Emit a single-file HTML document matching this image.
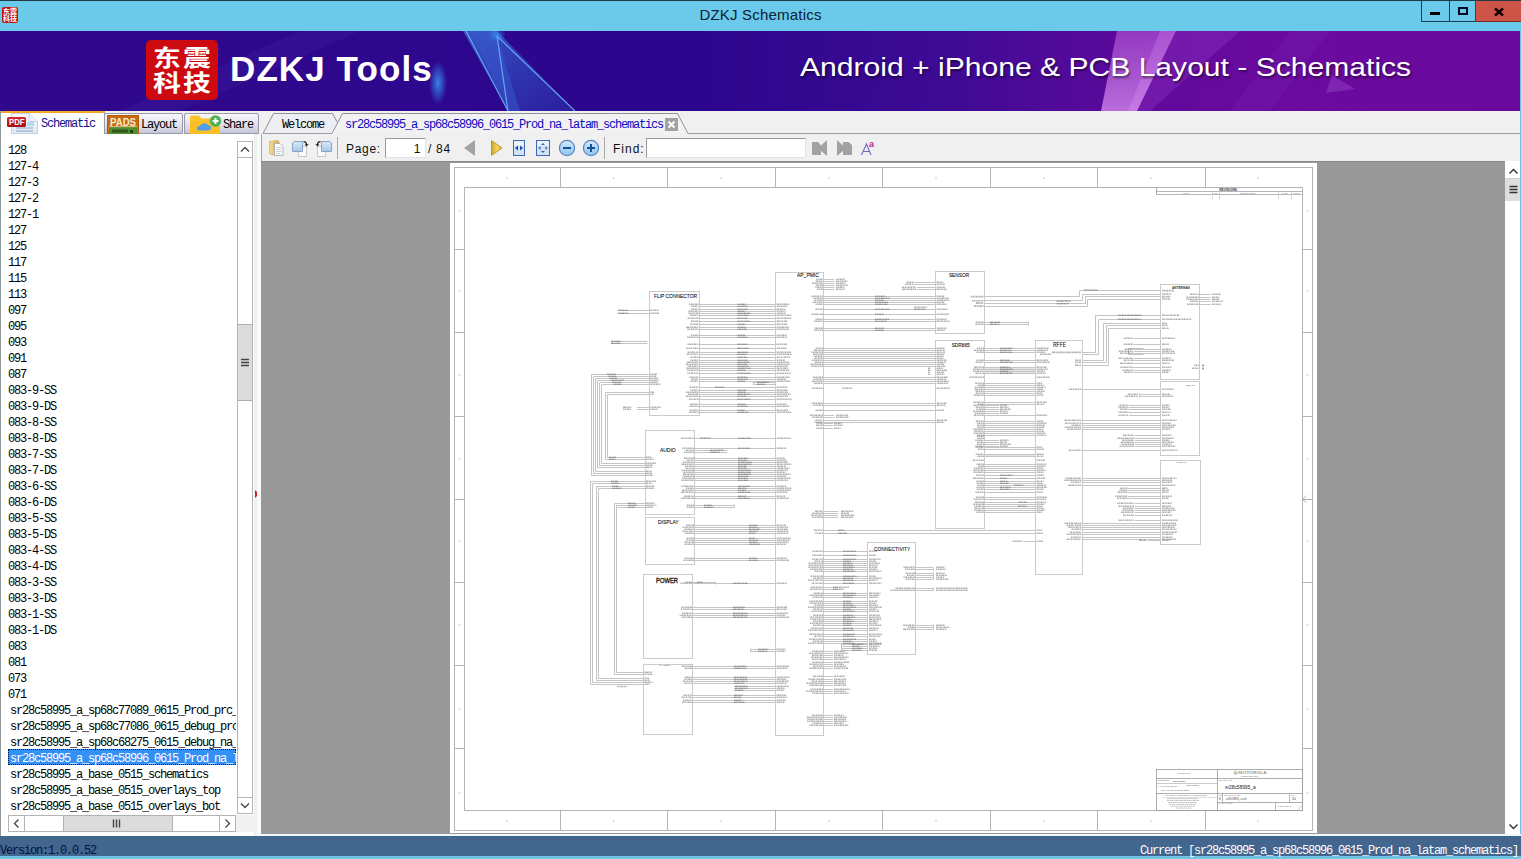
<!DOCTYPE html>
<html lang="en"><head><meta charset="utf-8"><title>DZKJ Schematics</title>
<style>
html,body{margin:0;padding:0}
body{width:1521px;height:859px;position:relative;overflow:hidden;background:#f0f0f0;font-family:"Liberation Sans",sans-serif;color:#000}
.abs,.abs *{position:absolute}
div{box-sizing:border-box}
.mono{font-family:"Liberation Mono","Noto Sans CJK SC",monospace;font-size:12px;letter-spacing:-1.2px;white-space:pre}
#titlebar{left:0;top:0;width:1521px;height:31px;background:#6bc9ea;border-top:1px solid #1d3b46}
#title{left:0;width:1521px;top:5px;text-align:center;font-size:15px;line-height:18px;color:#0c2238;letter-spacing:.2px}
#appicon{left:2px;top:6px;width:16px;height:16px;background:#c4120d;border-radius:2px;overflow:hidden}
#appicon span{color:#fff;font:bold 7px/7px "Liberation Sans","Noto Sans CJK SC",sans-serif;left:1px;top:1px;width:14px;letter-spacing:0}
#wbtns{left:1421px;top:0;width:100px;height:21px}
#wbtns .b{top:0;height:21px;border:1px solid #123f55;border-top:none}
#banner{left:0;top:31px;width:1520px;height:80px;overflow:hidden;background:linear-gradient(90deg,#30088c 0%,#2d078d 30%,#2a068c 45%,#3d0a94 62%,#5f0a9c 75%,#6b0a9e 85%,#6a0a9d 100%)}
#logo{left:146px;top:9px;width:72px;height:60px;background:#cc0a10;border-radius:5px}
#logo span{color:#fff;font:bold 22.5px/22.5px "Liberation Sans","Noto Sans CJK SC",sans-serif;left:7px;white-space:nowrap;letter-spacing:1.7px;transform:scaleX(1.24);transform-origin:0 0}
#bt1{left:230px;top:18px;color:#fff;font:bold 35px/40px "Liberation Sans",sans-serif;white-space:nowrap;letter-spacing:1.1px}
#bt2{left:800px;top:20px;color:#fff;font:26px/32px "Liberation Sans",sans-serif;white-space:nowrap;text-shadow:1px 2px 2px rgba(0,0,0,.5);transform:scaleX(1.157);transform-origin:0 0}
/* left tabs */
.ltab{top:113px;height:21px;border:1px solid #9a9aa8;border-radius:2px 2px 0 0;background:linear-gradient(#f6f6fa,#e2e2ee 55%,#c6c6da)}
.ltab span,.ttab span{top:4px;line-height:14px}
#leftpanel{left:1px;top:134px;width:253px;height:702px;background:#fff}
#list{left:8px;top:141px;width:228px;height:672px;overflow:hidden;background:#fff}
.li{left:0;height:16px;width:400px}
.li span{left:0;top:3px;line-height:14px;font-family:"Liberation Mono","Noto Sans CJK SC",monospace;font-size:12px;letter-spacing:-1.2px;white-space:pre}
.li.sr span{left:2px}
.li.sel{width:228px;background:#3390f5;border:1px dotted #113;}
.li.sel span{color:#fff;left:1px;top:2px}
.sb{background:#fff;border:1px solid #b4b4b4}
.thumb{background:#dcdcdc;border:1px solid #b0b0b0}
#viewport{left:261px;top:161px;width:1244px;height:673px;background:#999;overflow:hidden;border-top:1px solid #8a8a8a}
#status{z-index:3;left:0;top:836px;width:1521px;height:20px;background:#42668e;border-top:1px solid #3a6a88}
#bottomstrip{left:0;top:856px;width:1521px;height:3px;background:#6fc5e3}

#tb{left:262px;top:134px;width:1242px;height:27px}
.tbt{font:12px/16px "Liberation Sans",sans-serif;top:7px;white-space:nowrap;color:#111;letter-spacing:.7px}
.inp{background:#fff;border:1px solid #e3e3e3;border-top-color:#9a9a9a;border-left-color:#9a9a9a}
.vsep{width:1px;background:#a8a8a8;top:3px;height:22px}

</style></head>
<body>
<div class="abs" id="titlebar">
  <div id="appicon"><span>东震<br>科技</span></div>
  <div id="title">DZKJ Schematics</div>
  <div id="wbtns">
    <div class="b" style="left:0;width:29px"></div>
    <div class="b" style="left:28px;width:27px"></div>
    <div class="b" style="left:54px;width:46px;background:#cc5548;border-color:#7a2a22;border-right:none"></div>
    <div style="left:9px;top:11px;width:10px;height:3px;background:#000"></div>
    <div style="left:37px;top:6px;width:10px;height:8px;border:2px solid #06062a"></div>
    <svg style="left:72px;top:6px" width="12" height="10" viewBox="0 0 12 10"><path d="M2 1.500 L10 8.500 M10 1.500 L2 8.500" stroke="#100" stroke-width="2.500"/></svg>
  </div>
</div>
<div class="abs" id="banner">
  <svg style="left:0;top:0" width="1520" height="80" viewBox="0 0 1520 80">
    <defs>
      <linearGradient id="bl" x1="0" y1="0" x2="1" y2="1"><stop offset="0" stop-color="#3a6fd8" stop-opacity=".75"/><stop offset="1" stop-color="#2a48c0" stop-opacity=".35"/></linearGradient>
      <linearGradient id="pk" x1="0" y1="0" x2="0" y2="1"><stop offset="0" stop-color="#c060e0" stop-opacity=".55"/><stop offset="1" stop-color="#d890f0" stop-opacity=".75"/></linearGradient>
      <radialGradient id="glow"><stop offset="0" stop-color="#3aa0ff" stop-opacity=".8"/><stop offset="1" stop-color="#3aa0ff" stop-opacity="0"/></radialGradient>
    </defs>
    <polygon points="300,0 360,0 180,80 120,80" fill="#4a30b0" opacity=".18"/>
    <polygon points="463,0 497,0 575,80 508,80" fill="url(#bl)"/>
    <polygon points="497,6 520,80 508,80 470,0 497,0" fill="#3a60d0" opacity=".45"/>
    <path d="M497 5 L508 80 M497 5 L575 80 M466 0 L508 80" stroke="#6fc0ff" stroke-width="1.2" fill="none" opacity=".8"/>
    <ellipse cx="438" cy="52" rx="9" ry="22" fill="url(#glow)"/>
    <ellipse cx="497" cy="4" rx="9" ry="7" fill="url(#glow)" opacity=".8"/>
    <polygon points="1117,0 1176,0 1137,80 1101,80" fill="url(#pk)"/>
    <polygon points="1160,0 1176,0 1137,80 1128,80" fill="#e8a0ff" opacity=".25"/>
    <polygon points="1176,0 1240,0 1150,80 1137,80" fill="#a040d0" opacity=".28"/>
    <polygon points="1290,0 1330,0 1270,80 1230,80" fill="#8030c0" opacity=".18"/>
    <polygon points="1326,62 1355,58 1332,44" fill="#9a50d0" opacity=".4"/>
  </svg>
  <div id="logo"><span style="top:8px">东震</span><span style="top:33px">科技</span></div>
  <div id="bt1">DZKJ Tools</div>
  <div id="bt2">Android + iPhone &amp; PCB Layout - Schematics</div>
</div>
<div class="abs" id="tabs">
  <div style="left:1px;top:111px;width:104px;height:24px;background:#fff;border-top:2px solid #f5a623;border-right:1px solid #9a9aa8"></div>
  <div class="ltab" style="left:104px;width:79px"></div>
  <div class="ltab" style="left:184px;width:75px"></div>
  <svg style="left:0;top:111px" width="262" height="24" viewBox="0 111 262 24">
    <defs>
      <linearGradient id="pgd" x1="0" y1="0" x2="0" y2="1"><stop offset="0" stop-color="#f8fbfe"/><stop offset="1" stop-color="#dce9f6"/></linearGradient>
      <linearGradient id="redg" x1="0" y1="0" x2="0" y2="1"><stop offset="0" stop-color="#d8262c"/><stop offset="1" stop-color="#a80c12"/></linearGradient>
    </defs>
    <!-- pdf page -->
    <path d="M11.500 113.500 L29 113.500 L37.500 121.500 L37.500 133.500 L11.500 133.500 Z" fill="url(#pgd)" stroke="#c4d2e4" stroke-width="1"/>
    <path d="M29 113.500 L29 121.500 L37.500 121.500" fill="#eef4fb" stroke="#c4d2e4" stroke-width="1"/>
    <path d="M16 128 H33 M16 131 H33" stroke="#a8bcd4" stroke-width="1.3"/>
    <rect x="27" y="122" width="7" height="4" fill="#b8d4ee"/>
    <rect x="7" y="117" width="19" height="10" rx="1.500" fill="url(#redg)"/>
    <text x="9" y="125" font-family="Liberation Sans, sans-serif" font-weight="bold" font-size="8.500" fill="#fff" textLength="15.500" lengthAdjust="spacingAndGlyphs">PDF</text>
    <!-- PADS -->
    <rect x="107.500" y="115.500" width="31" height="18" fill="#c76a12" stroke="#b05a0a" stroke-width="1"/>
    <rect x="109" y="127" width="28" height="7" fill="#4f8c2c"/>
    <rect x="112" y="129.500" width="16" height="3" fill="#33561e"/>
    <rect x="130" y="130" width="3" height="3" fill="#22401a"/>
    <rect x="109" y="126" width="28" height="1.200" fill="#e9d9a0" opacity=".7"/>
    <text x="110" y="126" font-family="Liberation Sans, sans-serif" font-weight="bold" font-size="11" fill="#f6ebc8" textLength="26" lengthAdjust="spacingAndGlyphs">PADS</text>
    <!-- share folder -->
    <path d="M190 117 Q190 115.500 191.500 115.500 L199 115.500 L201.500 118.500 L218 118.500 Q220 118.500 220 120.500 L220 134 L190 134 Z" fill="#fcc42c"/>
    <path d="M190 121 L220 121 L220 134 L190 134 Z" fill="#fbbf24"/>
    <path d="M199.500 130.500 Q196 130.500 197 127.500 Q197.500 125.500 200 126 Q201.500 122.500 205 123.500 Q207.500 123 208.500 125.500 Q211.500 125.500 211 128.500 Q210.500 130.500 208 130.500 Z" fill="#4f9fec"/>
    <circle cx="215.500" cy="121" r="5.600" fill="#4caf50" stroke="#6cc070" stroke-width=".6"/>
    <path d="M212.500 121 H218.500 M215.500 118 V124" stroke="#fff" stroke-width="2"/>
  </svg>
  <div class="mono" style="left:41px;top:117px;line-height:14px;color:#10108c">Schematic</div>
  <div class="mono" style="left:141px;top:118px;line-height:14px">Layout</div>
  <div class="mono" style="left:223px;top:118px;line-height:14px">Share</div>
</div>
<div class="abs" id="toptabs">
  <svg style="left:255px;top:111px" width="1266" height="26" viewBox="255 111 1266 26">
    <path d="M263 133.5 L273.5 113.5 L332.5 113.5 L337.5 123 L332 133.5 Z" fill="#eceef3" stroke="none"/>
    <path d="M263 133.5 L273.5 113.5 L332.5 113.5 L338 123.5" fill="none" stroke="#8e9196" stroke-width="1"/>
    <path d="M263 133.5 L332 133.5" fill="none" stroke="#9a9da2" stroke-width="1"/>
    <path d="M332 133.5 L342.5 113.5 L677.5 113.5 L688 133.5" fill="#f2f2f2" stroke="#8e9196" stroke-width="1"/>
    <path d="M688 133.5 L1520 133.5" fill="none" stroke="#9a9da2" stroke-width="1"/>
    <rect x="665" y="118" width="13" height="13" fill="#a2a2a2"/>
    <path d="M668.5 121.5 L674.5 127.5 M674.5 121.5 L668.5 127.5" stroke="#fff" stroke-width="1.8"/>
  </svg>
  <div class="mono" style="left:282px;top:118px;line-height:14px">Welcome</div>
  <div class="mono" style="left:345px;top:118px;line-height:14px;color:#0a0ac0">sr28c58995_a_sp68c58996_0615_Prod_na_latam_schematics</div>
</div>
<div class="abs" id="tb">
  <div class="vsep" style="left:75px"></div>
  <div class="tbt" style="left:84px">Page:</div>
  <div class="inp" style="left:123px;top:4px;width:41px;height:20px"></div>
  <div class="tbt" style="left:123px;width:36px;text-align:right">1</div>
  <div class="tbt" style="left:166px">/ 84</div>
  <div class="vsep" style="left:342px"></div>
  <div class="tbt" style="left:351px;letter-spacing:1px">Find:</div>
  <div class="inp" style="left:384px;top:4px;width:160px;height:20px"></div>
  <svg style="left:0;top:0" width="1242" height="27" viewBox="262 134 1242 27">
  <defs>
    <linearGradient id="gold" x1="0" y1="0" x2="1" y2="0"><stop offset="0" stop-color="#c9a227"/><stop offset=".5" stop-color="#f2d65a"/><stop offset="1" stop-color="#e0b030"/></linearGradient>
    <linearGradient id="fold" x1="0" y1="0" x2="1" y2="0"><stop offset="0" stop-color="#f3d98a"/><stop offset="1" stop-color="#d9b060"/></linearGradient>
    <linearGradient id="bluepg" x1="0" y1="0" x2="0" y2="1"><stop offset="0" stop-color="#d8e8f8"/><stop offset="1" stop-color="#a8c8e8"/></linearGradient>
    <linearGradient id="circ" x1="0" y1="0" x2="0" y2="1"><stop offset="0" stop-color="#d6eafc"/><stop offset="1" stop-color="#8cc4f0"/></linearGradient>
  </defs>
  <!-- folder+doc -->
  <path d="M269.5 141.5 L277 140.5 L279 141 L279 153 L272 155 L269.5 153.5 Z" fill="url(#fold)" stroke="#cfa650" stroke-width=".6"/>
  <path d="M274.5 143.5 L280 143.5 L283 146.5 L283 155.5 L274.5 155.5 Z" fill="#fdfdfd" stroke="#9aa4b0" stroke-width=".8"/>
  <path d="M276 147.5 H281.5 M276 149.5 H281.5 M276 151.5 H281.5 M276 153.5 H280" stroke="#b5bcc6" stroke-width=".7"/>
  <!-- rotate pages 1 -->
  <path d="M299.5 146.500 L306.500 146.5 L306.500 156.5 L298.500 156.5 L298.500 150" fill="#fafafa" stroke="#c4c4c8" stroke-width=".9"/>
  <path d="M294 141.500 L302.500 141.500 L302.500 151.500 L292.500 151.500 L292.500 143 Z" fill="url(#bluepg)" stroke="#7e9cc4" stroke-width=".9"/>
  <path d="M303.500 141.700 Q306.600 141.700 306.600 145" fill="none" stroke="#222" stroke-width="1.2"/>
  <path d="M304.600 144.300 L308.600 144.300 L306.600 146.600 Z" fill="#222"/>
  <!-- rotate pages 2 -->
  <path d="M324.500 146.500 L317.500 146.500 L317.500 156.500 L325.500 156.500 L325.500 150" fill="#fafafa" stroke="#c4c4c8" stroke-width=".9"/>
  <path d="M321.500 141.500 L330 141.500 L331.500 143 L331.500 151.500 L321.500 151.500 Z" fill="url(#bluepg)" stroke="#7e9cc4" stroke-width=".9"/>
  <path d="M320.500 141.700 Q317.400 141.700 317.400 145" fill="none" stroke="#222" stroke-width="1.2"/>
  <path d="M315.400 144.300 L319.400 144.300 L317.400 146.600 Z" fill="#222"/>
  <!-- prev / next -->
  <path d="M475 140 L475 156 L464 148 Z" fill="#a3a3a3"/>
  <path d="M491.500 140.500 L491.500 155.500 L502 148 Z" fill="url(#gold)" stroke="#c09a28" stroke-width="1"/>
  <!-- fit width -->
  <rect x="513.500" y="140.500" width="11" height="15" fill="#cfe2f6" stroke="#3a6ab0" stroke-width="1"/>
  <rect x="514" y="141" width="10" height="5" fill="#eaf3fc"/>
  <path d="M518 145.500 L518 150.500 L515 148 Z M520 145.500 L520 150.500 L523 148 Z" fill="#1d4f9c"/>
  <!-- fit page -->
  <rect x="536.500" y="140.500" width="13" height="15" fill="#cfe2f6" stroke="#3a6ab0" stroke-width="1"/>
  <rect x="537" y="141" width="12" height="5" fill="#eaf3fc"/>
  <path d="M541 145 L545 145 L543 143 Z M541 151 L545 151 L543 153 Z M540.500 146 L540.500 150 L538.500 148 Z M545.500 146 L545.500 150 L547.500 148 Z" fill="#35609f"/>
  <!-- zoom out / in -->
  <circle cx="567" cy="148" r="7.600" fill="url(#circ)" stroke="#5a86c0" stroke-width="1.2"/>
  <rect x="563" y="147" width="8" height="2" fill="#14509c"/>
  <circle cx="591" cy="148" r="7.600" fill="url(#circ)" stroke="#5a86c0" stroke-width="1.2"/>
  <rect x="587" y="147" width="8" height="2" fill="#14509c"/><rect x="590" y="144" width="2" height="8" fill="#14509c"/>
  <!-- find prev / next -->
  <path d="M812 142 L818 142 L821 145.500 L827 140 L827 156 L821 151 L821 155 L812 155 Z" fill="#a2a2a2"/>
  <path d="M837 140 L843 145.500 L843 142 L848.500 142 L852 145 L852 155 L843 155 L843 151 L837 156 Z" fill="#a2a2a2"/>
  <!-- Aa -->
  <path d="M861.500 155 L866.500 144 L871 155 M863.500 151.500 L869.500 151.500" fill="none" stroke="#7468c8" stroke-width="1.1"/>
  <text x="869" y="147" font-family="Liberation Sans, sans-serif" font-size="9" fill="#c02888" font-weight="bold">a</text>
</svg>

</div>
<div class="abs" id="leftpanel"></div>
<div class="abs" id="list">
<div class="li" style="top:0px"><span>128</span></div>
<div class="li" style="top:16px"><span>127-4</span></div>
<div class="li" style="top:32px"><span>127-3</span></div>
<div class="li" style="top:48px"><span>127-2</span></div>
<div class="li" style="top:64px"><span>127-1</span></div>
<div class="li" style="top:80px"><span>127</span></div>
<div class="li" style="top:96px"><span>125</span></div>
<div class="li" style="top:112px"><span>117</span></div>
<div class="li" style="top:128px"><span>115</span></div>
<div class="li" style="top:144px"><span>113</span></div>
<div class="li" style="top:160px"><span>097</span></div>
<div class="li" style="top:176px"><span>095</span></div>
<div class="li" style="top:192px"><span>093</span></div>
<div class="li" style="top:208px"><span>091</span></div>
<div class="li" style="top:224px"><span>087</span></div>
<div class="li" style="top:240px"><span>083-9-SS</span></div>
<div class="li" style="top:256px"><span>083-9-DS</span></div>
<div class="li" style="top:272px"><span>083-8-SS</span></div>
<div class="li" style="top:288px"><span>083-8-DS</span></div>
<div class="li" style="top:304px"><span>083-7-SS</span></div>
<div class="li" style="top:320px"><span>083-7-DS</span></div>
<div class="li" style="top:336px"><span>083-6-SS</span></div>
<div class="li" style="top:352px"><span>083-6-DS</span></div>
<div class="li" style="top:368px"><span>083-5-SS</span></div>
<div class="li" style="top:384px"><span>083-5-DS</span></div>
<div class="li" style="top:400px"><span>083-4-SS</span></div>
<div class="li" style="top:416px"><span>083-4-DS</span></div>
<div class="li" style="top:432px"><span>083-3-SS</span></div>
<div class="li" style="top:448px"><span>083-3-DS</span></div>
<div class="li" style="top:464px"><span>083-1-SS</span></div>
<div class="li" style="top:480px"><span>083-1-DS</span></div>
<div class="li" style="top:496px"><span>083</span></div>
<div class="li" style="top:512px"><span>081</span></div>
<div class="li" style="top:528px"><span>073</span></div>
<div class="li" style="top:544px"><span>071</span></div>
<div class="li sr" style="top:560px"><span>sr28c58995_a_sp68c77089_0615_Prod_prc_schematics</span></div>
<div class="li sr" style="top:576px"><span>sr28c58995_a_sp68c77086_0615_debug_prc_schematics</span></div>
<div class="li sr" style="top:592px"><span>sr28c58995_a_sp68c68275_0615_debug_na_latam_schematics</span></div>
<div class="li sr sel" style="top:608px"><span>sr28c58995_a_sp68c58996_0615_Prod_na_latam_schematics</span></div>
<div class="li sr" style="top:624px"><span>sr28c58995_a_base_0515_schematics</span></div>
<div class="li sr" style="top:640px"><span>sr28c58995_a_base_0515_overlays_top</span></div>
<div class="li sr" style="top:656px"><span>sr28c58995_a_base_0515_overlays_bot</span></div>
</div>

<div class="abs" id="sbs">
  <div class="sb" style="left:237px;top:141px;width:16px;height:673px"></div>
  <div class="sb" style="left:237px;top:141px;width:16px;height:17px"></div>
  <div class="sb" style="left:237px;top:797px;width:16px;height:17px"></div>
  <div class="thumb" style="left:237px;top:324px;width:16px;height:77px"></div>
  <div class="sb" style="left:8px;top:815px;width:228px;height:17px"></div>
  <div class="sb" style="left:8px;top:815px;width:17px;height:17px"></div>
  <div class="sb" style="left:219px;top:815px;width:17px;height:17px"></div>
  <div class="thumb" style="left:63px;top:815px;width:110px;height:17px"></div>
  <svg style="left:0;top:134px" width="262" height="702" viewBox="0 134 262 702">
    <path d="M241 151.500 L245 147.500 L249 151.500" fill="none" stroke="#444" stroke-width="1.3"/>
    <path d="M241 803.500 L245 807.500 L249 803.500" fill="none" stroke="#444" stroke-width="1.3"/>
    <path d="M241 359.500 H249 M241 362.500 H249 M241 365.500 H249" stroke="#444" stroke-width="1.400"/>
    <path d="M18.500 819.500 L14.500 823.500 L18.500 827.500" fill="none" stroke="#444" stroke-width="1.3"/>
    <path d="M225.500 819.500 L229.500 823.500 L225.500 827.500" fill="none" stroke="#444" stroke-width="1.3"/>
    <path d="M113.500 819.500 V827.500 M116.500 819.500 V827.500 M119.500 819.500 V827.500" stroke="#444" stroke-width="1.400"/>
    <path d="M255 490 L259 494 L255 498 Z" fill="#d42020"/>
  </svg>
</div>
<div class="abs" id="vscroll">
  <div style="left:1505px;top:161px;width:15px;height:673px;background:#fff"></div>
  <div style="left:1505px;top:178px;width:15px;height:23px;background:#dedede;border-top:1px solid #cfcfcf"></div>
  <svg style="left:1505px;top:161px" width="15" height="673" viewBox="1505 161 15 673">
    <path d="M1509.500 173.500 L1513.500 169.500 L1517.500 173.500" fill="none" stroke="#333" stroke-width="1.400"/>
    <path d="M1509.500 824.500 L1513.500 828.500 L1517.500 824.500" fill="none" stroke="#333" stroke-width="1.400"/>
    <path d="M1509.500 186.500 H1517.500 M1509.500 189.500 H1517.500 M1509.500 192.500 H1517.500" stroke="#333" stroke-width="1.500"/>
  </svg>
  <div style="left:1520px;top:31px;width:1px;height:828px;background:#6cc2e8"></div>
</div>
<div class="abs" id="status">
  <div class="mono" style="left:0;top:7px;line-height:14px;color:#06103c">Version:1.0.0.52</div>
  <div class="mono" style="right:3px;top:7px;line-height:14px;color:#fff">Current [sr28c58995_a_sp68c58996_0615_Prod_na_latam_schematics]</div>
</div>
<div class="abs" id="bottomstrip"></div>
<div class="abs" style="left:236px;top:815px;width:18px;height:17px;background:#f0f0f0"></div>
<div class="abs" style="left:257px;top:135px;width:4px;height:701px;background:#fafafa"></div>
<div class="abs" style="left:261px;top:834px;width:1260px;height:2px;background:#f2f7fb"></div>
<div class="abs" style="left:0;top:111px;width:1px;height:725px;background:#8c989c"></div>
<div class="abs" style="left:261px;top:134px;width:1px;height:27px;background:#a4a4a4"></div>
<div class="abs" id="viewport">
<svg style="position:absolute;left:1px;top:-1px" width="1242" height="673" viewBox="262 161 1242 673" font-family="Liberation Sans, sans-serif" shape-rendering="auto">
<rect x="450" y="163" width="867" height="670" fill="#fff"/>
<rect x="454.5" y="167.5" width="858" height="663" fill="none" stroke="#b4b4b4" stroke-width="1"/>
<rect x="464.5" y="187.5" width="838" height="623" fill="none" stroke="#b4b4b4" stroke-width="1"/>
<path d="M560.5 167.5L560.5 187.5" stroke="#b4b4b4" stroke-width="1"/>
<path d="M560.5 810.5L560.5 830.5" stroke="#b4b4b4" stroke-width="1"/>
<path d="M667.5 167.5L667.5 187.5" stroke="#b4b4b4" stroke-width="1"/>
<path d="M667.5 810.5L667.5 830.5" stroke="#b4b4b4" stroke-width="1"/>
<path d="M775.5 167.5L775.5 187.5" stroke="#b4b4b4" stroke-width="1"/>
<path d="M775.5 810.5L775.5 830.5" stroke="#b4b4b4" stroke-width="1"/>
<path d="M882.5 167.5L882.5 187.5" stroke="#b4b4b4" stroke-width="1"/>
<path d="M882.5 810.5L882.5 830.5" stroke="#b4b4b4" stroke-width="1"/>
<path d="M990.5 167.5L990.5 187.5" stroke="#b4b4b4" stroke-width="1"/>
<path d="M990.5 810.5L990.5 830.5" stroke="#b4b4b4" stroke-width="1"/>
<path d="M1097.5 167.5L1097.5 187.5" stroke="#b4b4b4" stroke-width="1"/>
<path d="M1097.5 810.5L1097.5 830.5" stroke="#b4b4b4" stroke-width="1"/>
<path d="M1205.5 167.5L1205.5 187.5" stroke="#b4b4b4" stroke-width="1"/>
<path d="M1205.5 810.5L1205.5 830.5" stroke="#b4b4b4" stroke-width="1"/>
<path d="M454.5 249.5L464.5 249.5" stroke="#b4b4b4" stroke-width="1"/>
<path d="M1302.5 249.5L1312.5 249.5" stroke="#b4b4b4" stroke-width="1"/>
<path d="M454.5 332.5L464.5 332.5" stroke="#b4b4b4" stroke-width="1"/>
<path d="M1302.5 332.5L1312.5 332.5" stroke="#b4b4b4" stroke-width="1"/>
<path d="M454.5 416.5L464.5 416.5" stroke="#b4b4b4" stroke-width="1"/>
<path d="M1302.5 416.5L1312.5 416.5" stroke="#b4b4b4" stroke-width="1"/>
<path d="M454.5 499.5L464.5 499.5" stroke="#b4b4b4" stroke-width="1"/>
<path d="M1302.5 499.5L1312.5 499.5" stroke="#b4b4b4" stroke-width="1"/>
<path d="M454.5 582.5L464.5 582.5" stroke="#b4b4b4" stroke-width="1"/>
<path d="M1302.5 582.5L1312.5 582.5" stroke="#b4b4b4" stroke-width="1"/>
<path d="M454.5 665.5L464.5 665.5" stroke="#b4b4b4" stroke-width="1"/>
<path d="M1302.5 665.5L1312.5 665.5" stroke="#b4b4b4" stroke-width="1"/>
<path d="M454.5 748.5L464.5 748.5" stroke="#b4b4b4" stroke-width="1"/>
<path d="M1302.5 748.5L1312.5 748.5" stroke="#b4b4b4" stroke-width="1"/>
<rect x="506.4" y="177.2" width="1.2" height="1.6" fill="#c4c4c4"/>
<rect x="506.4" y="820.2" width="1.2" height="1.6" fill="#c4c4c4"/>
<rect x="612.9" y="177.2" width="1.2" height="1.6" fill="#c4c4c4"/>
<rect x="612.9" y="820.2" width="1.2" height="1.6" fill="#c4c4c4"/>
<rect x="720.4" y="177.2" width="1.2" height="1.6" fill="#c4c4c4"/>
<rect x="720.4" y="820.2" width="1.2" height="1.6" fill="#c4c4c4"/>
<rect x="828.4" y="177.2" width="1.2" height="1.6" fill="#c4c4c4"/>
<rect x="828.4" y="820.2" width="1.2" height="1.6" fill="#c4c4c4"/>
<rect x="935.4" y="177.2" width="1.2" height="1.6" fill="#c4c4c4"/>
<rect x="935.4" y="820.2" width="1.2" height="1.6" fill="#c4c4c4"/>
<rect x="1043.4" y="177.2" width="1.2" height="1.6" fill="#c4c4c4"/>
<rect x="1043.4" y="820.2" width="1.2" height="1.6" fill="#c4c4c4"/>
<rect x="1150.4" y="177.2" width="1.2" height="1.6" fill="#c4c4c4"/>
<rect x="1150.4" y="820.2" width="1.2" height="1.6" fill="#c4c4c4"/>
<rect x="1257.4" y="177.2" width="1.2" height="1.6" fill="#c4c4c4"/>
<rect x="1257.4" y="820.2" width="1.2" height="1.6" fill="#c4c4c4"/>
<rect x="458.7" y="210.4" width="1.6" height="1.2" fill="#c4c4c4"/>
<rect x="1306.7" y="210.4" width="1.6" height="1.2" fill="#c4c4c4"/>
<rect x="458.7" y="290.4" width="1.6" height="1.2" fill="#c4c4c4"/>
<rect x="1306.7" y="290.4" width="1.6" height="1.2" fill="#c4c4c4"/>
<rect x="458.7" y="374.4" width="1.6" height="1.2" fill="#c4c4c4"/>
<rect x="1306.7" y="374.4" width="1.6" height="1.2" fill="#c4c4c4"/>
<rect x="458.7" y="458.4" width="1.6" height="1.2" fill="#c4c4c4"/>
<rect x="1306.7" y="458.4" width="1.6" height="1.2" fill="#c4c4c4"/>
<rect x="458.7" y="540.4" width="1.6" height="1.2" fill="#c4c4c4"/>
<rect x="1306.7" y="540.4" width="1.6" height="1.2" fill="#c4c4c4"/>
<rect x="458.7" y="624.4" width="1.6" height="1.2" fill="#c4c4c4"/>
<rect x="1306.7" y="624.4" width="1.6" height="1.2" fill="#c4c4c4"/>
<rect x="458.7" y="708.4" width="1.6" height="1.2" fill="#c4c4c4"/>
<rect x="1306.7" y="708.4" width="1.6" height="1.2" fill="#c4c4c4"/>
<rect x="458.7" y="792.4" width="1.6" height="1.2" fill="#c4c4c4"/>
<rect x="1306.7" y="792.4" width="1.6" height="1.2" fill="#c4c4c4"/>
<path d="M1310.5 499.5L1302.5 499.5" stroke="#a0a0a0" stroke-width="0.7" fill="none"/>
<path d="M1306.5 495.5L1302.5 499.5L1306.5 502.5" stroke="#a0a0a0" stroke-width="0.7" fill="none"/>
<path d="M1298.5 809.5L1301.5 805.5" stroke="#a0a0a0" stroke-width="0.6"/>
<rect x="649.5" y="291.5" width="50" height="124" fill="none" stroke="#cbcbcb" stroke-width="1"/>
<rect x="775.5" y="272.5" width="48" height="463" fill="none" stroke="#cbcbcb" stroke-width="1"/>
<rect x="935.5" y="271.5" width="49" height="62" fill="none" stroke="#cbcbcb" stroke-width="1"/>
<rect x="935.5" y="340.5" width="49" height="188" fill="none" stroke="#cbcbcb" stroke-width="1"/>
<rect x="1035.5" y="340.5" width="47" height="234" fill="none" stroke="#cbcbcb" stroke-width="1"/>
<rect x="1160.5" y="284.5" width="39" height="95" fill="none" stroke="#cbcbcb" stroke-width="1"/>
<rect x="1160.5" y="381.5" width="39" height="74" fill="none" stroke="#cbcbcb" stroke-width="1"/>
<rect x="1160.5" y="460.5" width="40" height="84" fill="none" stroke="#cbcbcb" stroke-width="1"/>
<rect x="645.5" y="430.5" width="49" height="84" fill="none" stroke="#cbcbcb" stroke-width="1"/>
<rect x="645.5" y="517.5" width="49" height="47" fill="none" stroke="#cbcbcb" stroke-width="1"/>
<rect x="643.5" y="574.5" width="49" height="84" fill="none" stroke="#cbcbcb" stroke-width="1"/>
<rect x="643.5" y="664.5" width="49" height="70" fill="none" stroke="#cbcbcb" stroke-width="1"/>
<rect x="867.5" y="542.5" width="48" height="112" fill="none" stroke="#cbcbcb" stroke-width="1"/>
<path d="M753.5 382.5L753.5 384.5" stroke="#c4c4c4" stroke-width="1"/>
<path d="M649.5 374.5L591.5 374.5L591.5 475.5L645.5 475.5" stroke="#c4c4c4" stroke-width="1" fill="none"/>
<path d="M649.5 376.5L593.5 376.5L593.5 473.5L645.5 473.5" stroke="#c4c4c4" stroke-width="1" fill="none"/>
<path d="M649.5 378.5L595.5 378.5L595.5 471.5L645.5 471.5" stroke="#c4c4c4" stroke-width="1" fill="none"/>
<path d="M649.5 380.5L597.5 380.5L597.5 467.5L645.5 467.5" stroke="#c4c4c4" stroke-width="1" fill="none"/>
<path d="M649.5 382.5L599.5 382.5L599.5 465.5L645.5 465.5" stroke="#c4c4c4" stroke-width="1" fill="none"/>
<path d="M649.5 384.5L601.5 384.5L601.5 463.5L645.5 463.5" stroke="#c4c4c4" stroke-width="1" fill="none"/>
<path d="M649.5 392.5L605.5 392.5L605.5 459.5L645.5 459.5" stroke="#c4c4c4" stroke-width="1" fill="none"/>
<path d="M649.5 394.5L607.5 394.5L607.5 457.5L645.5 457.5" stroke="#c4c4c4" stroke-width="1" fill="none"/>
<path d="M645.5 481.5L590.5 481.5L590.5 684.5L643.5 684.5" stroke="#c4c4c4" stroke-width="1" fill="none"/>
<path d="M645.5 483.5L592.5 483.5L592.5 682.5L643.5 682.5" stroke="#c4c4c4" stroke-width="1" fill="none"/>
<path d="M645.5 486.5L596.5 486.5L596.5 680.5L643.5 680.5" stroke="#c4c4c4" stroke-width="1" fill="none"/>
<path d="M645.5 488.5L598.5 488.5L598.5 678.5L643.5 678.5" stroke="#c4c4c4" stroke-width="1" fill="none"/>
<path d="M645.5 503.5L614.5 503.5L614.5 674.5L643.5 674.5" stroke="#c4c4c4" stroke-width="1" fill="none"/>
<path d="M645.5 505.5L616.5 505.5L616.5 672.5L643.5 672.5" stroke="#c4c4c4" stroke-width="1" fill="none"/>
<path d="M734.5 504.5L734.5 507.5" stroke="#c4c4c4" stroke-width="1"/>
<path d="M715.5 581.5L715.5 584.5" stroke="#c4c4c4" stroke-width="1"/>
<path d="M750.5 648.5L750.5 651.5" stroke="#c4c4c4" stroke-width="1"/>
<path d="M984.5 296.5L1079.5 296.5L1079.5 290.5L1160.5 290.5" stroke="#c4c4c4" stroke-width="1" fill="none"/>
<path d="M984.5 300.5L1082.5 300.5L1082.5 294.5L1160.5 294.5" stroke="#c4c4c4" stroke-width="1" fill="none"/>
<path d="M984.5 303.5L1085.5 303.5L1085.5 296.5L1160.5 296.5" stroke="#c4c4c4" stroke-width="1" fill="none"/>
<path d="M984.5 306.5L1087.5 306.5L1087.5 299.5L1160.5 299.5" stroke="#c4c4c4" stroke-width="1" fill="none"/>
<path d="M1028.5 321.5L1028.5 325.5" stroke="#c4c4c4" stroke-width="1"/>
<rect x="984.6" y="367.5" width="50.8" height="6.4" fill="#e4e4e4"/>
<rect x="984.6" y="454.2" width="50.8" height="2.7" fill="#e4e4e4"/>
<path d="M1082.5 352.5L1095.5 352.5L1095.5 315.5L1160.5 315.5" stroke="#c4c4c4" stroke-width="1" fill="none"/>
<path d="M1082.5 354.5L1098.5 354.5L1098.5 319.5L1160.5 319.5" stroke="#c4c4c4" stroke-width="1" fill="none"/>
<path d="M1082.5 360.5L1103.5 360.5L1103.5 323.5L1160.5 323.5" stroke="#c4c4c4" stroke-width="1" fill="none"/>
<path d="M1082.5 362.5L1106.5 362.5L1106.5 325.5L1160.5 325.5" stroke="#c4c4c4" stroke-width="1" fill="none"/>
<path d="M1082.5 365.5L1108.5 365.5L1108.5 328.5L1160.5 328.5" stroke="#c4c4c4" stroke-width="1" fill="none"/>
<path d="M1139.5 393.5L1139.5 397.5" stroke="#c4c4c4" stroke-width="1"/>
<path d="M1143.5 348.5L1128.5 348.5L1128.5 354.5L1143.5 354.5" stroke="#c4c4c4" stroke-width="1" fill="none"/>
<rect x="1202" y="364.7" width="2" height="1.6" fill="#999"/>
<rect x="1202" y="367.7" width="2" height="1.6" fill="#999"/>
<path d="M841.5 643.5L841.5 650.5" stroke="#c4c4c4" stroke-width="1"/>
<path d="M933.5 567.5L933.5 570.5" stroke="#c4c4c4" stroke-width="1"/>
<path d="M933.5 572.5L933.5 579.5" stroke="#c4c4c4" stroke-width="1"/>
<path d="M933.5 587.5L933.5 590.5" stroke="#c4c4c4" stroke-width="1"/>
<path d="M933.5 624.5L933.5 629.5" stroke="#c4c4c4" stroke-width="1"/>
<path d="M699.2 304.5H775.2M699.2 306.5H775.2M699.2 309.5H775.2M699.2 311.5H775.2M699.2 313.5H775.2M699.2 315.5H775.2M699.2 318.5H775.2M699.2 321.5H775.2M699.2 324.5H775.2M699.2 327.5H775.2M699.2 329.5H775.2M699.2 335.5H775.2M699.2 337.5H775.2M699.2 344.5H775.2M699.2 348.5H775.2M699.2 352.5H775.2M699.2 354.5H775.2M699.2 357.5H775.2M699.2 360.5H775.2M699.2 362.5H775.2M699.2 364.5H775.2M699.2 366.5H775.2M699.2 368.5H775.2M699.2 370.5H775.2M699.2 373.5H775.2M699.2 377.5H775.2M699.2 379.5H775.2M699.2 381.5H775.2M699.2 390.5H775.2M699.2 392.5H775.2M699.2 394.5H775.2M699.2 396.5H775.2M699.2 399.5H775.2M699.2 404.5H775.2M699.2 406.5H775.2M699.2 410.5H775.2M699.2 412.5H775.2M699.2 387.5H775.2M753 382.5H775.2M753 384.5H775.2M617.6 310.5H649.3M617.6 313.5H649.3M611 341.5H647.4M611 343.5H647.4M636.8 407.5H649.3M636.8 409.5H649.3M618 507.5H645M694.6 438.5H775.2M694.6 448.5H775.2M694.6 458.5H775.2M694.6 460.5H775.2M694.6 462.5H775.2M694.6 464.5H775.2M694.6 466.5H775.2M694.6 468.5H775.2M694.6 470.5H775.2M694.6 472.5H775.2M694.6 474.5H775.2M694.6 476.5H775.2M694.6 478.5H775.2M694.6 480.5H775.2M694.6 486.5H775.2M694.6 488.5H775.2M694.6 490.5H775.2M694.6 492.5H775.2M694.6 496.5H775.2M694.6 498.5H775.2M694.6 450.5H727.5M694.6 452.5H727.5M694.6 505.5H734M694.6 507.5H734M694.6 525.5H775.2M694.6 527.5H775.2M694.6 529.5H775.2M694.6 531.5H775.2M694.6 533.5H775.2M694.6 538.5H775.2M694.6 540.5H775.2M694.6 542.5H775.2M694.6 544.5H775.2M694.6 558.5H775.2M694.6 560.5H775.2M692.7 583.5H775.2M692.7 607.5H775.2M692.7 609.5H775.2M692.7 613.5H775.2M692.7 615.5H775.2M692.7 617.5H775.2M692.7 582.5H715M750 649.5H775.2M750 651.5H775.2M692.7 666.5H775.2M692.7 668.5H775.2M692.7 677.5H775.2M692.7 679.5H775.2M692.7 681.5H775.2M692.7 683.5H775.2M692.7 695.5H775.2M692.7 697.5H775.2M692.7 700.5H775.2M692.7 702.5H775.2M734 686.5H775.2M734 688.5H775.2M734 690.5H775.2M823.5 296.5H935.4M823.5 298.5H935.4M823.5 300.5H935.4M823.5 302.5H935.4M823.5 304.5H935.4M823.5 309.5H935.4M823.5 314.5H935.4M823.5 319.5H935.4M823.5 321.5H935.4M823.5 328.5H935.4M823.5 330.5H935.4M823.5 348.5H935.4M823.5 350.5H935.4M823.5 352.5H935.4M823.5 354.5H935.4M823.5 356.5H935.4M823.5 358.5H935.4M823.5 360.5H935.4M823.5 362.5H935.4M823.5 364.5H935.4M823.5 366.5H935.4M823.5 377.5H935.4M823.5 379.5H935.4M823.5 381.5H935.4M823.5 383.5H935.4M823.5 403.5H935.4M823.5 405.5H935.4M823.5 410.5H935.4M823.5 420.5H935.4M823.5 422.5H935.4M823.5 279.5H834.3M823.5 281.5H834.3M823.5 283.5H834.3M823.5 285.5H834.3M823.5 287.5H834.3M823.5 289.5H834.3M823.5 415.5H834.3M823.5 417.5H834.3M823.5 423.5H833M823.5 425.5H833M823.5 428.5H833M915 282.5H935.4M915 284.5H935.4M917 287.5H935.4M917 289.5H935.4M823.5 511.5H838.2M823.5 513.5H838.2M823.5 515.5H838.2M823.5 517.5H838.2M823.5 530.5H1035.4M823.5 533.5H1035.4M984.4 322.5H1028.4M984.4 324.5H1028.4M984.6 348.5H1035.4M984.6 350.5H1035.4M984.6 352.5H1035.4M984.6 360.5H1035.4M984.6 362.5H1035.4M984.6 367.5H1035.4M984.6 369.5H1035.4M984.6 371.5H1035.4M984.6 373.5H1035.4M984.6 383.5H1035.4M984.6 385.5H1035.4M984.6 387.5H1035.4M984.6 389.5H1035.4M984.6 391.5H1035.4M984.6 393.5H1035.4M984.6 395.5H1035.4M984.6 402.5H1035.4M984.6 404.5H1035.4M984.6 415.5H1035.4M984.6 421.5H1035.4M984.6 423.5H1035.4M984.6 425.5H1035.4M984.6 427.5H1035.4M984.6 429.5H1035.4M984.6 431.5H1035.4M984.6 433.5H1035.4M984.6 435.5H1035.4M984.6 447.5H1035.4M984.6 449.5H1035.4M984.6 454.5H1035.4M984.6 456.5H1035.4M984.6 464.5H1035.4M984.6 466.5H1035.4M984.6 468.5H1035.4M984.6 470.5H1035.4M984.6 472.5H1035.4M984.6 475.5H1035.4M984.6 478.5H1035.4M984.6 481.5H1035.4M984.6 483.5H1035.4M984.6 485.5H1035.4M984.6 487.5H1035.4M984.6 489.5H1035.4M984.6 492.5H1035.4M984.6 497.5H1035.4M984.6 499.5H1035.4M984.6 502.5H1035.4M984.6 504.5H1035.4M984.6 506.5H1035.4M984.6 508.5H1035.4M984.6 510.5H1035.4M984.6 512.5H1035.4M984.6 405.5H999M984.6 407.5H999M984.6 409.5H999M984.6 411.5H999M984.6 413.5H999M984.6 440.5H999M984.6 442.5H999M984.6 444.5H999M984.6 446.5H999M1022.9 541.5H1035.4M1082.1 389.5H1160.7M1082.1 420.5H1160.7M1082.1 423.5H1160.7M1082.1 425.5H1160.7M1082.1 427.5H1160.7M1082.1 429.5H1160.7M1082.1 450.5H1160.7M1082.1 478.5H1160.7M1082.1 480.5H1160.7M1082.1 482.5H1160.7M1082.1 485.5H1160.7M1082.1 523.5H1160.7M1082.1 525.5H1160.7M1082.1 527.5H1160.7M1082.1 529.5H1160.7M1082.1 532.5H1160.7M1082.1 534.5H1160.7M1082.1 537.5H1160.7M1082.1 539.5H1160.7M1139 394.5H1160.7M1139 396.5H1160.7M1129 405.5H1160.7M1129 407.5H1160.7M1129 409.5H1160.7M1129 412.5H1160.7M1129 415.5H1160.7M1134.7 435.5H1160.7M1134.7 438.5H1160.7M1134.7 440.5H1160.7M1134.7 442.5H1160.7M1134.7 444.5H1160.7M1134.7 446.5H1160.7M1128 488.5H1160.7M1128 490.5H1160.7M1128 492.5H1160.7M1128 496.5H1160.7M1128 498.5H1160.7M1134.7 503.5H1160.7M1134.7 506.5H1160.7M1134.7 508.5H1160.7M1134.7 510.5H1160.7M1134.7 512.5H1160.7M1134.7 515.5H1160.7M1134.7 520.5H1160.7M1148 540.5H1160.7M1134 338.5H1160.7M1134 344.5H1160.7M1134 349.5H1160.7M1134 351.5H1160.7M1134 353.5H1160.7M1134 358.5H1160.7M1134 360.5H1160.7M1134 363.5H1160.7M1134 367.5H1160.7M1134 370.5H1160.7M1134 372.5H1160.7M1199.6 294.5H1210.6M1199.6 297.5H1210.6M1199.6 299.5H1210.6M1199.6 301.5H1210.6M1199.6 304.5H1210.6M823.4 551.5H867.9M823.4 555.5H867.9M823.4 559.5H867.9M823.4 561.5H867.9M823.4 563.5H867.9M823.4 565.5H867.9M823.4 567.5H867.9M823.4 569.5H867.9M823.4 571.5H867.9M823.4 576.5H867.9M823.4 578.5H867.9M823.4 580.5H867.9M823.4 583.5H867.9M823.4 593.5H867.9M823.4 595.5H867.9M823.4 597.5H867.9M823.4 601.5H867.9M823.4 603.5H867.9M823.4 605.5H867.9M823.4 607.5H867.9M823.4 609.5H867.9M823.4 611.5H867.9M823.4 615.5H867.9M823.4 617.5H867.9M823.4 619.5H867.9M823.4 621.5H867.9M823.4 623.5H867.9M823.4 625.5H867.9M823.4 628.5H867.9M823.4 630.5H867.9M823.4 634.5H867.9M823.4 636.5H867.9M823.4 639.5H867.9M823.4 641.5H867.9M823.4 643.5H867.9M823.4 587.5H838M823.4 589.5H838M841.6 644.5H867.9M841.6 646.5H867.9M841.6 648.5H867.9M841.6 650.5H867.9M823.4 651.5H833M823.4 653.5H833M823.4 655.5H833M823.4 657.5H833M823.4 659.5H833M823.4 662.5H833M823.4 664.5H833M823.4 666.5H833M823.4 668.5H833M823.4 676.5H833M823.4 679.5H833M823.4 681.5H833M823.4 683.5H833M823.4 685.5H833M823.4 689.5H833M823.4 691.5H833M823.4 693.5H833M823.4 715.5H833M823.4 717.5H833M823.4 719.5H833M823.4 721.5H833M823.4 723.5H833M823.4 725.5H833M915.7 567.5H933.5M915.7 569.5H933.5M915.7 573.5H933.5M915.7 575.5H933.5M915.7 577.5H933.5M915.7 579.5H933.5M915.7 625.5H933.5M915.7 627.5H933.5M915.7 629.5H933.5M915.7 588.5H933.5M915.7 590.5H933.5" stroke="#c4c4c4" stroke-width="1" fill="none"/>
<path d="M737.5 309.2H748M737.5 315.2H748.7M776.6 315.2H791.6M776.6 329.2H788.9M690.7 335.2H698.6M776.6 354.2H791.9M690.4 357.2H698.6M776.6 360.2H785.3M776.6 362.2H789M776.6 381.2H790.4M737.5 396.2H746.6M689.5 387.2H698.6M618 310.2H628.5M650.3 310.2H659M623 409.2H631.1M646 475.2H653M608.3 376.2H616.3M650.3 376.2H656.2M646 473.2H652.2M646 459.2H653.7M644.4 680.3H649.7M646 488.3H654.7M611 481.2H618.3M611 483.2H618.9M612 486.2H618.9M612 488.2H621.9M617 686.5H627.1M738 438.2H751.1M776.6 460.2H786.9M738 462.2H751.7M681.6 470.2H694M738 472.2H750.7M776.6 476.2H786.3M738 490.2H746.6M776.6 490.2H790.8M776.6 498.2H788.7M700 438H710.7M704 505.2H712.2M686.8 507.2H694M704 507.2H713.8M749 525.2H757.9M682.5 527.2H694M776.6 533.2H788.1M686.4 538.2H694M749 558.2H756.9M776.6 560.2H789M733 607.2H744.7M680.8 609.2H692M776.6 613.2H788.2M776.6 617.2H789M758 649.2H768.5M776.6 649.2H785.6M776.6 697.2H787.3M735 690.2H743.7M936.6 358.2H943.5M811.6 360.2H823M811.1 366.2H823M813.6 379.2H823M928 372.2H930M836 279.2H845M836 283.2H845.6M836 417.2H848.4M936.6 284.2H944.8M812.1 388.2H823M842 388.2H852.5M1036.6 348.2H1048.5M1000 367.2H1010.1M973.1 371.2H984M1000 371.2H1008.2M1036.6 425.2H1045M1036.6 433.2H1045.6M977.9 466.2H984M1036.6 466.2H1045.8M973.8 468.2H984M976.1 475.2H984M1036.6 492.2H1043.2M1000 405.2H1007.3M976.5 409.2H984M974.7 413.2H984M1000 413.2H1008.2M977.1 442.2H984M1000 446.2H1007.8M977 436.2H984M1014 485.2H1023.5M1012.6 541.2H1022M1118 315.2H1141.9M1118 319.2H1140.9M1162 323.2H1166.9M1075 362.2H1081M1064.8 427.2H1081.3M1067.2 429.2H1081.3M1162 429.2H1170.8M1070.9 482.2H1081.3M1162 523.2H1176M1162 532.2H1177.4M1066.8 534.2H1081.3M1162 534.2H1173M1070.8 537.2H1081.3M1162 537.2H1172.6M1119.4 405.2H1128.5M1121.4 444.2H1134M1119.5 446.2H1134M1162 498.2H1169.1M1162 508.2H1174.5M1124 344.2H1133.5M1162 351.2H1174.3M1187 304.2H1198.8M869 555.2H876.3M869 559.2H880.6M843 561.2H850.9M809.9 569.2H823M810.5 576.2H823M843 576.2H856.6M869 576.2H876.3M843 601.2H851.2M843 603.2H852.3M869 603.2H876.5M814.5 605.2H823M808.1 607.2H823M843 609.2H851.2M843 623.2H852M843 625.2H851.7M843 634.2H854.8M843 643.2H854.4M869 648.2H877.4M812.1 662.2H823M834 685.2H846.1M806 691.2H823M834 715.2H843.4M806.9 721.2H823M907.7 627.2H915M936 629.2H946.7" stroke="#585858" stroke-width="1.6" stroke-dasharray="1.7 .5 1.1 .4 2.3 .5" fill="none" opacity=".46"/>
<path d="M688.5 313.2H698.6M737.5 318.2H747.3M686.3 348.2H698.6M737.5 348.2H749.2M686.7 354.2H698.6M776.6 357.2H790.3M737.5 360.2H747.9M685.8 364.2H698.6M737.5 364.2H746.8M776.6 368.2H788.4M685.8 396.2H698.6M737.5 399.2H750.3M776.6 410.2H788M646 471.2H651.6M609 459.2H615.7M646 481.3H656.2M681.1 438.2H694M686.7 460.2H694M776.6 464.2H791.7M685.7 468.2H694M738 470.2H751M738 476.2H748.7M776.6 496.2H785.2M685.8 450.2H694M710 450.2H724.1M776.6 525.2H786M749 527.2H757.5M749 529.2H760.5M682.4 531.2H694M749 533.2H755.7M749 538.2H755.6M749 540.2H758.2M684.4 542.2H694M776.6 609.2H787.2M733 615.2H747.6M681.8 666.2H692M682.8 681.2H692M734 681.2H747.9M684.5 683.2H692M683.6 695.2H692M681.5 697.2H692M936.6 321.2H949.6M875 328.2H884.1M936.6 352.2H945M812.9 354.2H823M936.6 403.2H947M815.4 420.2H823M812.1 283.2H823M836 289.2H844.7M936.6 282.2H943.4M936.6 388.2H949.9M811 515.2H823M914 307.2H926.9M1036.6 360.2H1048.4M1036.6 367.2H1046.9M975.4 373.2H984M975.1 383.2H984M975.6 393.2H984M1036.6 402.2H1046.7M1036.6 404.2H1044.5M973.9 415.2H984M1036.6 456.2H1043.9M973.4 470.2H984M1036.6 481.2H1044.3M974.3 508.2H984M973.4 405.2H984M1000 411.2H1008M1000 444.2H1011.5M972.7 460.2H984M1000 475.2H1012.7M1162 325.2H1168.2M1075.2 360.2H1081M1162 420.2H1176.9M1065 423.2H1081.3M1068.7 450.2H1081.3M1162 450.2H1177.5M1162 478.2H1177M1068.2 527.2H1081.3M1066.8 539.2H1081.3M1162 412.2H1170.4M1118.7 520.2H1134M1118.5 358.2H1133.5M1123.7 360.2H1133.5M1190.1 294.2H1198.8M1192.1 368.2H1199M869 551.2H877.3M814.5 561.2H823M869 565.2H877.7M869 571.2H881.5M808.3 580.2H823M869 580.2H877.6M811.8 583.2H823M843 593.2H855.8M843 607.2H856.3M869 611.2H878.8M869 617.2H881.1M843 628.2H852.8M869 630.2H877.5M869 634.2H881.9M869 639.2H876.4M812.1 655.2H823M812.2 659.2H823M812.9 666.2H823M811.5 681.2H823M905.7 573.2H915M936 573.2H944.6M936 627.2H949.6" stroke="#585858" stroke-width="1.6" stroke-dasharray="2.4 .5 .9 .4 1.5 .6 .8 .4" fill="none" opacity=".46"/>
<path d="M689.1 304.2H698.6M776.6 306.2H787.6M688.5 311.2H698.6M737.5 313.2H749.9M737.5 329.2H747.2M687.5 344.2H698.6M776.6 348.2H786.8M737.5 357.2H747.5M737.5 362.2H749.6M687.5 366.2H698.6M686 368.2H698.6M776.6 370.2H789.9M689.4 377.2H698.6M737.5 390.2H746.4M685.8 392.2H698.6M737.5 394.2H750.3M776.6 406.2H789.2M776.6 412.2H791.7M650.3 313.2H659.1M650.3 409.2H657.7M650.3 382.2H657.9M646 463.2H656M650.3 392.2H654.6M646 457.2H652M644.4 684.3H649.8M644.4 672.3H651.8M628 505.2H637M646 507.2H653.2M682.1 448.2H694M738 458.2H747.9M738 466.2H747.1M682.2 478.2H694M738 480.2H748.2M681.2 498.2H694M738 498.2H749.8M683.9 452.2H694M686.7 505.2H694M686 525.2H694M776.6 540.2H790.1M681.6 617.2H692M776.6 666.2H789.4M684.6 677.2H692M776.6 679.2H786.4M776.6 702.2H784.4M776.6 688.2H784.6M875 296.2H885.1M875 298.2H889.4M812.5 302.2H823M875 309.2H889.6M936.6 309.2H947.8M815.5 319.2H823M814.3 328.2H823M875 330.2H884M936.6 330.2H944.9M936.6 366.2H945.8M811.7 403.2H823M936.6 368.2H943.3M928 374.2H930.3M815.4 287.2H823M834 428.2H840.7M838 533.2H847.3M1036.6 533.2H1043.3M971.9 300.7H983.6M1162 299H1170.4M976.8 348.2H984M1000 362.2H1012.4M1000 369.2H1012.5M1036.6 383.2H1042.4M1036.6 385.2H1043.6M974.6 389.2H984M1036.6 391.2H1044.5M976.9 423.2H984M973.2 429.2H984M973.6 433.2H984M976.8 435.2H984M976.4 464.2H984M1036.6 472.2H1043.7M1036.6 478.2H1045.1M1036.6 512.2H1042.5M976.9 444.2H984M1036.6 377.2H1050M1036.6 460.2H1044.8M1000 481.2H1007.3M1018 502.2H1026.8M1068.7 389.2H1081.3M1162 425.2H1175.9M1064.2 480.2H1081.3M1064.5 523.2H1081.3M1162 525.2H1176.3M1124.6 396.2H1138M1162 409.2H1171.1M1118.2 412.2H1128.5M1162 415.2H1169.6M1162 446.2H1175.5M1123 508.2H1134M1162 510.2H1175.7M1120.9 512.2H1134M1212 294.2H1220.5M1189.7 301.2H1198.8M812.3 555.2H823M843 567.2H854.6M814.7 571.2H823M809.2 595.2H823M869 595.2H879.7M809.5 601.2H823M869 607.2H881.9M812.8 621.2H823M809.8 623.2H823M869 625.2H881.3M808.1 630.2H823M843 641.2H851.5M869 643.2H881.6M833 587.2H849M833 589.2H844.3M852 648.2H862.8M834 651.2H845.3M834 659.2H845.7M809.3 685.2H823M834 689.2H850M834 693.2H848.9M834 717.2H846.6M809.4 725.2H823M834 725.2H848.3M903.5 567.2H915M905 569.2H915M903.4 577.2H915M905.8 579.2H915" stroke="#585858" stroke-width="1.6" stroke-dasharray="1.2 .4 2 .5 1.4 .5 2.6 .5" fill="none" opacity=".46"/>
<path d="M737.5 304.2H745.8M690.7 306.2H698.6M690.8 309.2H698.6M776.6 313.2H785.9M689.8 315.2H698.6M737.5 324.2H745.6M687 337.2H698.6M776.6 364.2H789.9M737.5 368.2H750.7M691 379.2H698.6M776.6 379.2H786.2M690.3 390.2H698.6M737.5 412.2H748.4M618 313.2H628.4M650.3 374.2H657M650.3 380.2H659.1M646 465.2H653.1M650.3 394.2H653.7M646 505.3H656.3M628 507.2H635M776.6 438.2H790.7M776.6 448.2H786.6M776.6 466.2H786.6M776.6 468.2H789.4M682.5 476.2H694M776.6 478.2H790.6M681.2 480.2H694M681.3 486.2H694M686.1 488.2H694M738 492.2H749.8M683.6 496.2H694M684.2 529.2H694M749 531.2H758.3M776.6 531.2H788.8M684.6 533.2H694M749 542.2H757.4M679.7 615.2H692M685.3 582.2H692M776.6 677.2H789.8M684.2 679.2H692M734 700.2H741.8M776.6 686.2H788.7M936.6 300.2H949.5M815.5 304.2H823M875 304.2H887.9M811.2 314.2H823M875 319.2H889.1M813.9 321.2H823M936.6 328.2H947.1M811.4 352.2H823M813.8 356.2H823M936.6 362.2H946.1M936.6 379.2H946.2M813.8 383.2H823M936.6 383.2H948.1M814.4 422.2H823M836 285.2H847.8M836 287.2H844.5M836 415.2H848.4M816.2 428.2H823M841 515.2H854.3M813.8 530.2H823M815.2 533.2H823M914 309.2H925.4M1162 290.6H1174M1056.6 303.7H1068.7M1036.6 350.2H1047.9M1036.6 371.2H1044.9M977.6 385.2H984M1036.6 389.2H1043.7M973.5 395.2H984M973.1 402.2H984M1036.6 421.2H1043.6M973.9 431.2H984M1036.6 475.2H1044.2M1036.6 485.2H1046.2M974.4 506.2H984M974.2 510.2H984M975.2 440.2H984M975.5 446.2H984M1071.5 425.2H1081.3M1065.4 478.2H1081.3M1067.7 485.2H1081.3M1119.4 490.2H1127.5M1115.2 496.2H1127.5M1162 540.2H1170M1123.5 338.2H1133.5M1162 349.2H1171.5M1162 360.2H1174.6M1122.4 370.2H1133.5M1162 370.2H1171.1M1123.8 372.2H1133.5M1162 372.2H1169.2M1212 301.2H1223M869 561.2H876.5M843 563.2H852.3M869 569.2H877.8M813.5 593.2H823M843 597.2H852.7M869 597.2H878.3M869 609.2H876.7M869 621.2H878.3M813.1 625.2H823M810.8 628.2H823M809.1 639.2H823M808.2 643.2H823M869 646.2H879.6M834 662.2H849.4M809.4 668.2H823M808.3 679.2H823M834 679.2H846.5M812.4 723.2H823M936 567.2H944.3M936 569.2H946M936 577.2H944.4M936 579.2H948.8M936 625.2H944.9" stroke="#585858" stroke-width="1.6" stroke-dasharray=".9 .4 1.9 .5 2.8 .6 1.2 .4" fill="none" opacity=".46"/>
<path d="M737.5 321.2H750.1M690.2 324.2H698.6M776.6 366.2H788.2M737.5 370.2H745.3M737.5 373.2H751M737.5 377.2H747.3M737.5 379.2H747.7M737.5 392.2H745.4M776.6 394.2H790.7M776.6 399.2H791.7M776.6 404.2H786.7M715 387.2H724.4M776.6 387.2H787.7M757 382.2H769M611 341.2H620.4M650.3 378.2H657.9M612.2 382.2H621.5M646 483.3H652.2M646 486.3H654.7M776.6 458.2H785.3M738 460.2H747.5M738 468.2H747M683 472.2H694M776.6 472.2H785.7M738 474.2H751.4M776.6 474.2H790.5M738 478.2H747.8M776.6 492.2H787.5M776.6 538.2H790.6M776.6 542.2H788.7M684.4 558.2H694M683.2 560.2H694M749 560.2H758.3M681.3 607.2H692M776.6 615.2H785.5M697 582.2H703M776.6 668.2H788M734 677.2H747.3M776.6 700.2H786M682 702.2H692M875 300.2H884.3M936.6 304.2H946.5M815.4 309.2H823M875 321.2H887M815.6 348.2H823M936.6 348.2H944.5M936.6 350.2H945.1M936.6 354.2H944.4M810.4 364.2H823M813 377.2H823M936.6 410.2H944.1M928 368.2H930.8M815.7 285.2H823M901.8 287.2H916M936.6 287.2H945.4M841 513.2H849M812.2 517.2H823M973.9 306.1H983.6M975.6 322.2H983.6M975.4 324.2H983.6M973.9 350.2H984M976.5 352.2H984M1036.6 362.2H1049.9M1000 373.2H1012.4M1036.6 373.2H1045.8M1036.6 393.2H1042.9M1036.6 415.2H1046.9M977.9 449.2H984M976.5 487.2H984M975.4 492.2H984M976.1 497.2H984M1036.6 497.2H1046.8M973.3 504.2H984M976.5 512.2H984M973.1 411.2H984M1000 483.2H1008.9M1000 487.2H1010.4M1000 489.2H1009.8M1162 482.2H1171.9M1162 527.2H1174.8M1070 532.2H1081.3M1127.8 394.2H1138M1162 394.2H1170.1M1122.3 440.2H1134M1120.8 442.2H1134M1162 442.2H1173.9M1120 488.2H1127.5M1117 498.2H1127.5M1162 503.2H1171.7M1118.4 506.2H1134M1122.4 510.2H1134M1162 512.2H1170.9M1162 338.2H1174.8M1118.7 351.2H1133.5M1162 363.2H1169.3M1186.3 297.2H1198.8M843 559.2H855.8M869 563.2H880.5M808.7 565.2H823M869 567.2H877.7M843 583.2H853.8M869 601.2H877.3M843 605.2H854.2M811.4 611.2H823M810.2 617.2H823M852 644.2H863.7M852 650.2H861.3M869 650.2H877M809.1 653.2H823M834 664.2H843.8M834 666.2H846.4M834 676.2H844.6M806.4 683.2H823M810.5 689.2H823M806.8 717.2H823M834 723.2H843.5M936 575.2H947M903.2 625.2H915M890.4 590.2H915" stroke="#585858" stroke-width="1.6" stroke-dasharray="2.1 .6 1.6 .4 .8 .4 2.2 .5" fill="none" opacity=".46"/>
<path d="M776.6 311.2H785.7M687.6 318.2H698.6M737.5 327.2H746M687.6 352.2H698.6M776.6 352.2H791.1M690.2 360.2H698.6M687.1 370.2H698.6M687.2 373.2H698.6M690.4 381.2H698.6M737.5 381.2H745.3M776.6 392.2H788.2M776.6 396.2H787.9M737.5 404.2H746M737.5 406.2H747.9M689.5 410.2H698.6M737.5 410.2H744.9M757 384.2H765M650.3 407.2H660.9M609.6 378.2H617.9M610.9 380.2H624.1M613.5 384.2H622M644.4 678.3H649.2M776.6 470.2H788.4M776.6 480.2H787.9M776.6 486.2H786.2M710 452.2H719.7M776.6 527.2H788.2M684.4 544.2H694M749 544.2H759.8M776.6 558.2H787M680.4 583.2H692M733 583.2H747.4M682.1 613.2H692M758 651.2H767.2M734 668.2H746.2M734 683.2H744.4M776.6 683.2H787.1M683 700.2H692M776.6 690.2H784.2M811.3 296.2H823M813.4 298.2H823M875 302.2H888M875 314.2H883.8M936.6 314.2H949.1M936.6 319.2H946.7M815.5 410.2H823M816.2 279.2H823M816.9 289.2H823M816.4 423.2H823M834 423.2H842M905.1 284.2H914.5M812.1 513.2H823M1162 294H1171.1M1056.6 301.2H1070.6M1000 350.2H1011.1M1000 352.2H1012.3M975.6 362.2H984M972.9 369.2H984M1036.6 369.2H1047.7M1036.6 387.2H1045.6M1036.6 435.2H1046.5M975.7 454.2H984M1036.6 464.2H1046.3M1036.6 468.2H1042.9M976.2 481.2H984M976.6 483.2H984M1036.6 483.2H1042.5M976.7 489.2H984M973.6 499.2H984M1036.6 502.2H1046.6M1036.6 504.2H1044.9M1036.6 508.2H1044.4M1036.6 510.2H1045.3M1000 478.2H1007.2M1036.6 541.2H1043.4M1066.7 525.2H1081.3M1162 405.2H1169.8M1118.2 407.2H1128.5M1118.5 415.2H1128.5M1162 440.2H1169.8M1162 444.2H1171.3M1117.2 503.2H1134M1162 515.2H1172.3M1162 358.2H1171.1M1120.3 367.2H1133.5M1212 297.2H1219.3M1186.2 299.2H1198.8M1193.9 365.2H1199M812.2 551.2H823M843 555.2H856.4M812 559.2H823M843 569.2H852.7M813.2 578.2H823M869 583.2H881.6M812.5 597.2H823M809.7 603.2H823M813 609.2H823M843 615.2H853.3M869 615.2H879.8M810.3 619.2H823M869 628.2H878.5M843 636.2H853.7M869 636.2H880.9M812.8 641.2H823M869 641.2H877.3M812.1 651.2H823M834 655.2H843.4M834 668.2H848.2M812.1 693.2H823M807.4 719.2H823M895.5 588.2H915M936 588.2H967.9" stroke="#585858" stroke-width="1.6" stroke-dasharray="1.4 .4 1.4 .5 2.5 .5 1 .5" fill="none" opacity=".46"/>
<path d="M776.6 304.2H789.6M776.6 309.2H785.3M737.5 311.2H745.3M776.6 318.2H791.8M776.6 321.2H787.1M776.6 324.2H787.2M686.1 327.2H698.6M776.6 344.2H787.1M737.5 352.2H748.1M687 362.2H698.6M776.6 390.2H787.8M687.8 394.2H698.6M690.2 404.2H698.6M689.7 406.2H698.6M611 343.2H620.5M623 407.2H631.4M646 467.2H652.2M644.4 682.3H652.8M628 503.2H635.9M738 448.2H750.4M683.8 458.2H694M776.6 462.2H788.2M681.4 464.2H694M683 474.2H694M738 486.2H750.3M738 488.2H746.7M681.1 492.2H694M738 496.2H746.5M776.6 529.2H788M776.6 544.2H785.8M776.6 607.2H787.1M733 609.2H744.3M733 617.2H747.6M734 695.2H742.9M776.6 695.2H785.9M734 697.2H741.8M734 702.2H744.9M735 686.2H747.9M814.5 330.2H823M814 350.2H823M936.6 356.2H943.5M936.6 360.2H946.5M814.7 362.2H823M936.6 377.2H948.1M811.8 381.2H823M936.6 381.2H948.9M936.6 405.2H945.4M936.6 420.2H947.6M936.6 422.2H944.3M936.6 370.2H947.3M936.6 374.2H944.4M815.6 281.2H823M815.9 425.2H823M906.6 282.2H914.5M902 289.2H916M936.6 289.2H946.4M815 511.2H823M841 511.2H853.3M841 517.2H853.3M838 530.2H844.1M975.9 303.1H983.6M990 322.2H1000M990 324.2H999.2M1000 360.2H1009.4M974 367.2H984M975.4 391.2H984M975.7 421.2H984M1036.6 454.2H1043.7M977.3 456.2H984M973 478.2H984M1036.6 487.2H1046.7M1036.6 489.2H1043.6M974.8 502.2H984M975.6 407.2H984M1000 407.2H1008.5M1000 409.2H1010.6M1000 442.2H1007.5M977.5 438.2H984M1018 506.2H1026.8M1162 315.2H1179.3M1162 328.2H1168.7M1052 352.4H1081M1075 365.2H1081M1064.4 420.2H1081.3M1162 427.2H1174.2M1162 539.2H1175.8M1122.9 435.2H1134M1117.3 438.2H1134M1162 488.2H1167.7M1162 490.2H1169.4M1117.6 492.2H1127.5M1162 492.2H1168.4M1162 506.2H1171.2M1139 540.2H1147M1162 344.2H1169.5M1119.9 353.2H1133.5M1119.8 363.2H1133.5M1212 299.2H1219.7M843 565.2H852.8M843 571.2H855.5M843 580.2H853.1M869 593.2H880.5M843 617.2H855.4M869 619.2H881.1M809.3 634.2H823M869 644.2H881.7M852 646.2H859.8M813 676.2H823M834 681.2H845.7M834 683.2H845.7M834 719.2H846.5M834 721.2H846.9M903.1 629.2H915" stroke="#585858" stroke-width="1.6" stroke-dasharray="3 .5 1.2 .4 1.8 .6" fill="none" opacity=".46"/>
<path d="M737.5 306.2H748.2M690.8 321.2H698.6M776.6 327.2H789.1M687.2 329.2H698.6M737.5 335.2H745.3M776.6 335.2H786.5M737.5 337.2H747.5M776.6 337.2H787.2M737.5 344.2H747.7M737.5 354.2H746.7M737.5 366.2H748.4M776.6 373.2H790.8M776.6 377.2H789.7M688.9 399.2H698.6M688.9 412.2H698.6M607 374.2H616M650.3 384.2H660.3M609 457.2H616M646 503.3H654.7M644.4 674.3H652.9M682.8 462.2H694M738 464.2H751.9M684.7 466.2H694M776.6 488.2H791.3M682.1 490.2H694M686.5 540.2H694M776.6 583.2H786.6M733 613.2H747.6M776.6 651.2H785.6M734 666.2H746.6M684.6 668.2H692M734 679.2H747.7M776.6 681.2H789M735 688.2H747.8M936.6 296.2H944.8M936.6 298.2H948.9M814.3 300.2H823M936.6 302.2H944.5M814.4 358.2H823M936.6 364.2H944M813.5 405.2H823M928 370.2H930.6M936.6 372.2H944.3M836 281.2H847.8M810 415.2H823M812.1 417.2H823M834 425.2H842.8M1036.6 530.2H1042.4M970.7 296.6H983.6M1162 296.6H1170.5M1083.8 290H1098M1000 348.2H1012.7M1036.6 352.2H1045.5M976.4 360.2H984M974.6 387.2H984M1036.6 395.2H1043.3M977.9 404.2H984M1036.6 423.2H1046.7M976.9 425.2H984M977.2 427.2H984M1036.6 427.2H1044.8M1036.6 429.2H1042.9M1036.6 431.2H1044.7M975.5 447.2H984M1036.6 447.2H1042.4M1036.6 449.2H1044.6M1036.6 470.2H1045.7M973.5 472.2H984M977.4 485.2H984M1036.6 499.2H1046.1M1036.6 506.2H1042.6M1000 440.2H1008.7M969.6 377.2H984M1162 319.2H1191.6M1040 354.2H1051.3M1162 389.2H1174M1162 423.2H1171M1162 480.2H1172.6M1162 485.2H1175.7M1071.5 529.2H1081.3M1162 529.2H1176.4M1162 396.2H1173.4M1162 407.2H1168.7M1119.9 409.2H1128.5M1162 435.2H1171.3M1162 438.2H1174.1M1162 496.2H1171.7M1122.9 515.2H1134M1162 520.2H1177.6M1124.6 349.2H1133.5M1162 353.2H1175M1162 367.2H1171.4M1212 304.2H1220.9M843 551.2H856.5M808.5 563.2H823M808.3 567.2H823M843 578.2H853.7M869 578.2H881.7M843 595.2H855.6M869 605.2H878.1M843 611.2H855.2M813.2 615.2H823M843 619.2H851.5M843 621.2H854.3M869 623.2H877.6M843 630.2H853.9M814.1 636.2H823M843 639.2H856.5M810.8 587.2H823M810.2 589.2H823M834 653.2H848.3M811.1 657.2H823M834 657.2H848.5M809.5 664.2H823M834 691.2H846.1M812.1 715.2H823M906.9 575.2H915M936 590.2H967.6" stroke="#585858" stroke-width="1.6" stroke-dasharray="1.9 .4 .9 .4 1.3 .4 2.2 .6" fill="none" opacity=".46"/>
<text x="654" y="297.8" font-size="6.2" fill="#111" stroke="#111" stroke-width="0.1" textLength="43" lengthAdjust="spacingAndGlyphs">FLIP CONNECTOR</text>
<text x="797" y="277.4" font-size="6.2" fill="#111" stroke="#111" stroke-width="0.1" textLength="21.8" lengthAdjust="spacingAndGlyphs">AP_PMIC</text>
<text x="948.9" y="277.2" font-size="6.2" fill="#111" stroke="#111" stroke-width="0.1" textLength="20.2" lengthAdjust="spacingAndGlyphs">SENSOR</text>
<text x="951.7" y="346.9" font-size="6.2" fill="#111" stroke="#111" stroke-width="0.1" textLength="18" lengthAdjust="spacingAndGlyphs">SDR865</text>
<text x="1053" y="347.4" font-size="6.4" fill="#111" stroke="#111" stroke-width="0.1" textLength="13" lengthAdjust="spacingAndGlyphs">RFFE</text>
<text x="659.9" y="452" font-size="6.2" fill="#111" stroke="#111" stroke-width="0.1" textLength="15.8" lengthAdjust="spacingAndGlyphs">AUDIO</text>
<text x="658" y="524" font-size="6.2" fill="#111" stroke="#111" stroke-width="0.1" textLength="20.7" lengthAdjust="spacingAndGlyphs">DISPLAY</text>
<text x="656" y="582.6" font-size="6.8" fill="#111" stroke="#111" stroke-width="0.3" textLength="22" lengthAdjust="spacingAndGlyphs">POWER</text>
<text x="874" y="550.6" font-size="6.2" fill="#111" stroke="#111" stroke-width="0.1" textLength="36.3" lengthAdjust="spacingAndGlyphs">CONNECTIVITY</text>
<text x="1172" y="289.4" font-size="3" font-weight="bold" fill="#333" text-anchor="start" textLength="18" lengthAdjust="spacingAndGlyphs">ANTENNAS</text>
<text x="1186" y="386.3" font-size="2.4" font-weight="normal" fill="#555" text-anchor="start" textLength="9" lengthAdjust="spacingAndGlyphs">SUB_RF</text>
<text x="1176" y="463.4" font-size="2.4" font-weight="normal" fill="#666" text-anchor="start" textLength="11" lengthAdjust="spacingAndGlyphs">TUNER_RF</text>
<text x="659" y="666.3" font-size="2.4" font-weight="normal" fill="#555" text-anchor="start" textLength="11" lengthAdjust="spacingAndGlyphs">CHARGER</text>
<path d="M1156.5 187.5L1156.5 194.5" stroke="#9a9a9a" stroke-width="0.8"/>
<path d="M1156.5 191.5L1302.5 191.5" stroke="#9a9a9a" stroke-width="0.7"/>
<path d="M1156.5 194.5L1302.5 194.5" stroke="#9a9a9a" stroke-width="0.7"/>
<path d="M1212.5 191.5L1212.5 199.5" stroke="#c4c4c4" stroke-width="0.7"/>
<path d="M1219.5 191.5L1219.5 199.5" stroke="#c4c4c4" stroke-width="0.7"/>
<path d="M1278.5 191.5L1278.5 199.5" stroke="#c4c4c4" stroke-width="0.7"/>
<path d="M1291.5 191.5L1291.5 199.5" stroke="#c4c4c4" stroke-width="0.7"/>
<text x="1219.2" y="190.8" font-size="3.2" font-weight="bold" fill="#333" text-anchor="start" textLength="17.8" lengthAdjust="spacingAndGlyphs">REVISIONS</text>
<text x="1183" y="193.7" font-size="2" font-weight="normal" fill="#777" text-anchor="start" textLength="5.5" lengthAdjust="spacingAndGlyphs">ZONE</text>
<text x="1214" y="193.7" font-size="2" font-weight="normal" fill="#777" text-anchor="start" textLength="3.4" lengthAdjust="spacingAndGlyphs">LTR</text>
<text x="1240" y="193.7" font-size="2" font-weight="normal" fill="#777" text-anchor="start" textLength="15" lengthAdjust="spacingAndGlyphs">DESCRIPTION</text>
<text x="1282" y="193.7" font-size="2" font-weight="normal" fill="#777" text-anchor="start" textLength="5.5" lengthAdjust="spacingAndGlyphs">DATE</text>
<text x="1293" y="193.7" font-size="2" font-weight="normal" fill="#777" text-anchor="start" textLength="6.5" lengthAdjust="spacingAndGlyphs">APPVD</text>
<rect x="1156.5" y="769.5" width="146" height="41" fill="none" stroke="#9a9a9a" stroke-width="0.8"/>
<path d="M1217.5 769.5L1217.5 810.5" stroke="#9a9a9a" stroke-width="0.8"/>
<path d="M1156.5 778.5L1302.5 778.5" stroke="#9a9a9a" stroke-width="0.8"/>
<path d="M1156.5 783.5L1217.5 783.5" stroke="#b4b4b4" stroke-width="0.7"/>
<path d="M1156.5 793.5L1302.5 793.5" stroke="#9a9a9a" stroke-width="0.8"/>
<path d="M1217.5 802.5L1302.5 802.5" stroke="#9a9a9a" stroke-width="0.8"/>
<path d="M1222.5 793.5L1222.5 802.5" stroke="#9a9a9a" stroke-width="0.7"/>
<path d="M1289.5 793.5L1289.5 802.5" stroke="#9a9a9a" stroke-width="0.7"/>
<path d="M1275.5 802.5L1275.5 810.5" stroke="#9a9a9a" stroke-width="0.7"/>
<text x="1225" y="789" font-size="5.2" font-weight="normal" fill="#222" text-anchor="start" textLength="30.6" lengthAdjust="spacingAndGlyphs">sr28c58995_a</text>
<text x="1225.7" y="799.8" font-size="2.8" font-weight="normal" fill="#444" text-anchor="start" textLength="21" lengthAdjust="spacingAndGlyphs">sr28c58995_a.sch</text>
<text x="1292" y="800.2" font-size="3.2" font-weight="normal" fill="#444" text-anchor="start" textLength="4.2" lengthAdjust="spacingAndGlyphs">01</text>
<text x="1238.3" y="774" font-size="3.4" font-weight="bold" fill="#999" text-anchor="start" textLength="28.5" lengthAdjust="spacingAndGlyphs">MOTOROLA</text>
<text x="1241" y="777.2" font-size="1.8" font-weight="normal" fill="#777" text-anchor="start" textLength="17" lengthAdjust="spacingAndGlyphs">MOBILE DEVICES</text>
<circle cx="1235.5" cy="772.8" r="1.7" fill="none" stroke="#888" stroke-width=".5"/><path d="M1234.500 774L1235.500 771.800L1236.500 774" stroke="#888" stroke-width=".5" fill="none"/>
<text x="1176.9" y="774.2" font-size="2.2" font-weight="normal" fill="#666" text-anchor="start" textLength="12.8" lengthAdjust="spacingAndGlyphs">APPROVALS</text>
<text x="1158" y="781.4" font-size="1.8" font-weight="normal" fill="#777" text-anchor="start" textLength="11" lengthAdjust="spacingAndGlyphs">DESIGNER</text>
<text x="1173" y="781.6" font-size="2.4" font-weight="normal" fill="#555" text-anchor="start" textLength="12.5" lengthAdjust="spacingAndGlyphs">ENGINEER</text>
<text x="1158" y="787" font-size="1.8" font-weight="normal" fill="#777" text-anchor="start" textLength="20" lengthAdjust="spacingAndGlyphs">LAST MODIFIED BY</text>
<text x="1186.5" y="786.3" font-size="2.4" font-weight="normal" fill="#666" text-anchor="start" textLength="12.5" lengthAdjust="spacingAndGlyphs">ENGINEER</text>
<text x="1161" y="790.8" font-size="2.4" font-weight="normal" fill="#555" text-anchor="start" textLength="28" lengthAdjust="spacingAndGlyphs">Tue Apr 28 14:15:05 2020</text>
<text x="1165" y="796.2" font-size="2.2" font-weight="normal" fill="#777" text-anchor="start" textLength="42" lengthAdjust="spacingAndGlyphs">MOTOROLA CONFIDENTIAL RESTRICTED</text>
<path d="M1162.5 797.5L1216.5 797.5" stroke="#c0c0c0" stroke-width="0.5"/>
<path d="M1167 798.6H1198" stroke="#9a9a9a" stroke-width=".9" stroke-dasharray="2.1 .5 1.3 .4" opacity=".7"/>
<path d="M1167 800.5H1199" stroke="#9a9a9a" stroke-width=".9" stroke-dasharray="2.1 .5 1.3 .4" opacity=".7"/>
<path d="M1168 802.4H1197" stroke="#9a9a9a" stroke-width=".9" stroke-dasharray="2.1 .5 1.3 .4" opacity=".7"/>
<path d="M1169 804.3H1196" stroke="#9a9a9a" stroke-width=".9" stroke-dasharray="2.1 .5 1.3 .4" opacity=".7"/>
<path d="M1171 806.2H1195" stroke="#9a9a9a" stroke-width=".9" stroke-dasharray="2.1 .5 1.3 .4" opacity=".7"/>
<path d="M1176 808.1H1191" stroke="#9a9a9a" stroke-width=".9" stroke-dasharray="2.1 .5 1.3 .4" opacity=".7"/>
<text x="1219" y="796" font-size="1.6" font-weight="normal" fill="#888" text-anchor="start" textLength="4" lengthAdjust="spacingAndGlyphs">SIZE</text>
<text x="1219" y="800.2" font-size="3" font-weight="normal" fill="#555" text-anchor="start" textLength="2" lengthAdjust="spacingAndGlyphs">E</text>
<text x="1224" y="795.6" font-size="1.8" font-weight="normal" fill="#777" text-anchor="start" textLength="16" lengthAdjust="spacingAndGlyphs">DRAWING NAME</text>
<text x="1291" y="795.6" font-size="1.8" font-weight="normal" fill="#888" text-anchor="start" textLength="4" lengthAdjust="spacingAndGlyphs">REV</text>
<text x="1219" y="804.3" font-size="1.8" font-weight="normal" fill="#888" text-anchor="start" textLength="13" lengthAdjust="spacingAndGlyphs">LAST SAVED</text>
<text x="1277.5" y="806.8" font-size="2" font-weight="normal" fill="#666" text-anchor="start" textLength="14" lengthAdjust="spacingAndGlyphs">PAGE 1 OF 84</text>
<text x="1219" y="780.6" font-size="1.8" font-weight="normal" fill="#777" text-anchor="start" textLength="13" lengthAdjust="spacingAndGlyphs">BOARD TITLE</text>
</svg>
</div>

</body></html>
